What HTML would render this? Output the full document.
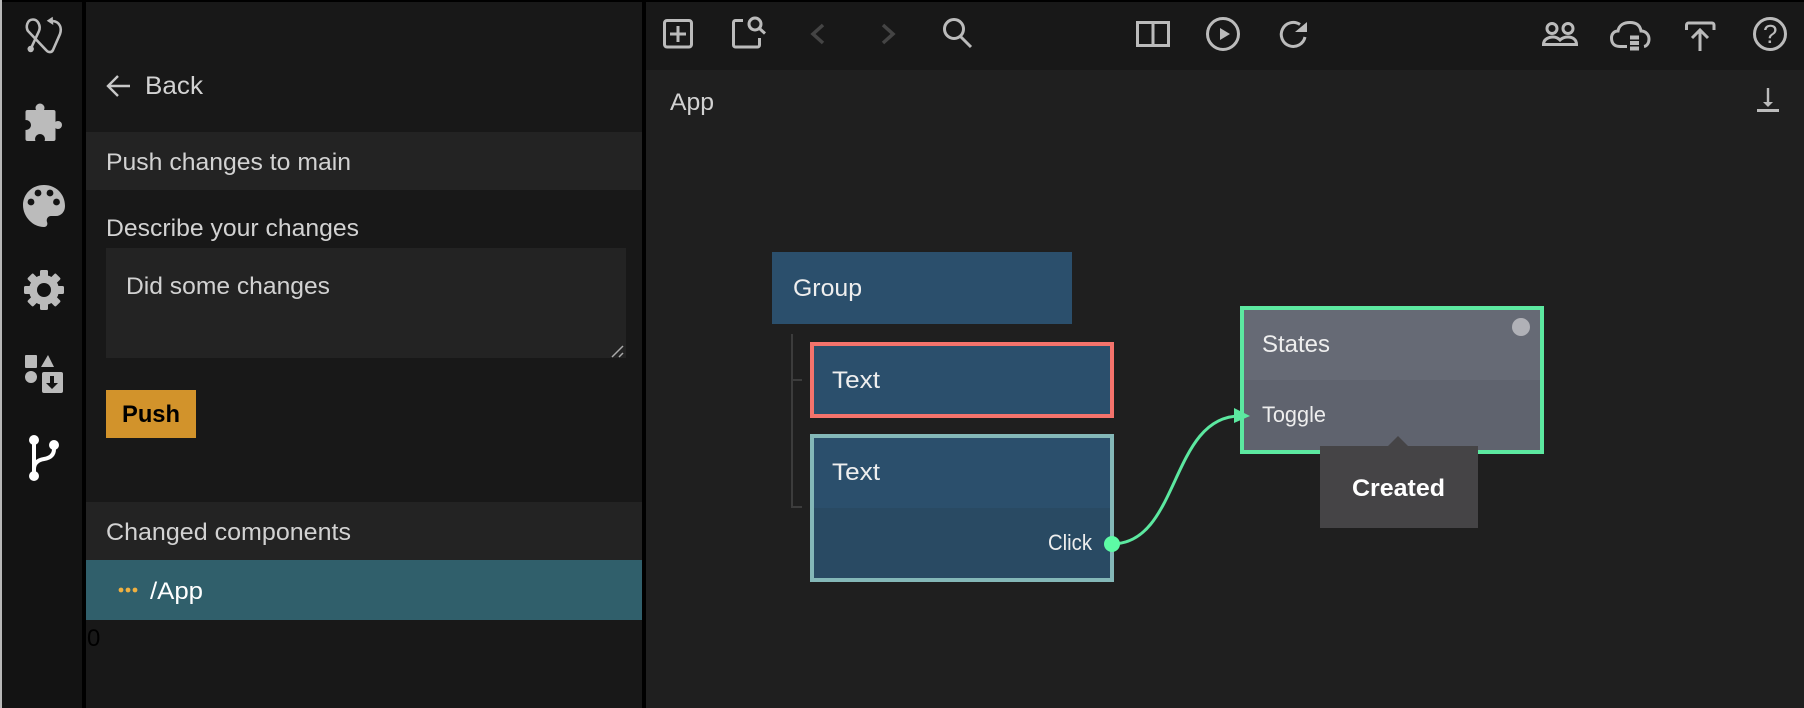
<!DOCTYPE html>
<html><head><meta charset="utf-8"><style>
html,body{margin:0;padding:0;background:#000;width:1804px;height:708px;overflow:hidden}
svg{display:block}
text{font-family:"Liberation Sans",sans-serif;font-size:24px;fill:#d2d2d2}
.i{fill:none;stroke:#bbb;stroke-width:3}
</style></head><body>
<svg width="1804" height="708" viewBox="0 0 1804 708" xmlns="http://www.w3.org/2000/svg">
<rect width="1804" height="708" fill="#000"/>
<rect x="0" y="0" width="2" height="708" fill="#b8b8b8"/>
<rect x="2" y="2" width="80" height="706" fill="#131313"/>
<rect x="86" y="2" width="556" height="706" fill="#181818"/>
<rect x="646" y="2" width="1158" height="68" fill="#181818"/>
<rect x="646" y="70" width="1158" height="638" fill="#1f1f1f"/>

<!-- sidebar icons -->
<path d="M30.7,49 L39,31 C41,26 38,19.5 33,19.5 C27,19.5 25.5,27 28,31 L46,50 C48,52.5 51.5,53 53,50 L60,34 C62,28 60,22 53,21" fill="none" stroke="#bbb" stroke-width="2.6"/>
<circle cx="30.7" cy="49" r="3.2" fill="#bbb"/><path d="M46.7,20.7 L52.7,16.7 L53.3,25Z" fill="#bbb"/>
<rect x="25.5" y="110" width="30" height="31" rx="2" fill="#bbb"/><circle cx="40" cy="108" r="4.5" fill="#bbb"/><circle cx="58" cy="125" r="4" fill="#bbb"/><circle cx="26" cy="125" r="5" fill="#131313"/><circle cx="40" cy="139" r="5" fill="#131313"/>
<path d="M44,185 C32,185 23,194 23,205 C23,217 33,227 44,227 C47,227 48,224 47,222 C46,219 48,216 51,216 H56 C61,216 65,212 65,206 C65,194 56,185 44,185Z" fill="#bbb"/>
<g fill="#131313"><circle cx="31" cy="202" r="3.4"/><circle cx="38" cy="193" r="3.4"/><circle cx="50" cy="193" r="3.4"/><circle cx="56.5" cy="202" r="3.4"/></g>
<g fill="#bbb"><circle cx="44" cy="290" r="15"/>
<rect x="40" y="270" width="8" height="40" rx="1.5"/><rect x="40" y="270" width="8" height="40" rx="1.5" transform="rotate(45 44 290)"/><rect x="40" y="270" width="8" height="40" rx="1.5" transform="rotate(90 44 290)"/><rect x="40" y="270" width="8" height="40" rx="1.5" transform="rotate(135 44 290)"/></g>
<circle cx="44" cy="290" r="7" fill="#131313"/>
<rect x="25" y="355" width="12" height="13" rx="1" fill="#bbb"/><path d="M48,355 L41,367 H54Z" fill="#bbb"/><circle cx="31" cy="377" r="6" fill="#bbb"/>
<rect x="42" y="372" width="21" height="21" rx="2" fill="#bbb"/><path d="M50,376 H54 V383 H58 L52,389 L46,383 H50Z" fill="#131313"/>
<path d="M34,440 V476 M54,445 V449 C54,455 50,458 44,459 C38,460 34,463 34,469" fill="none" stroke="#fff" stroke-width="4"/>
<circle cx="34" cy="440" r="5" fill="#fff"/><circle cx="34" cy="476" r="5" fill="#fff"/><circle cx="54" cy="445" r="5" fill="#fff"/>

<!-- panel -->
<path d="M130,86 H109 M118,76 L108,86 L118,96" fill="none" stroke="#c8c8c8" stroke-width="2.4"/>
<text x="145" y="94" textLength="58" lengthAdjust="spacingAndGlyphs" style="font-size:25px">Back</text>
<rect x="86" y="132" width="556" height="58" fill="#232323"/>
<text x="106" y="170" textLength="245" lengthAdjust="spacingAndGlyphs">Push changes to main</text>
<text x="106" y="236" textLength="253" lengthAdjust="spacingAndGlyphs">Describe your changes</text>
<rect x="106" y="248" width="520" height="110" fill="#232323"/>
<text x="126" y="294" textLength="204" lengthAdjust="spacingAndGlyphs">Did some changes</text>
<path d="M612,357 L623,346 M619,357 L623,353" stroke="#aaa" stroke-width="1.5" fill="none"/>
<rect x="106" y="390" width="90" height="48" fill="#d2932b"/>
<text x="122" y="422" textLength="58" lengthAdjust="spacingAndGlyphs" style="font-weight:bold;fill:#000">Push</text>
<rect x="86" y="502" width="556" height="58" fill="#232323"/>
<text x="106" y="540" textLength="245" lengthAdjust="spacingAndGlyphs">Changed components</text>
<rect x="86" y="560" width="556" height="60" fill="#305f6b"/>
<g fill="#f0b040"><circle cx="121" cy="590" r="2.4"/><circle cx="128" cy="590" r="2.4"/><circle cx="135" cy="590" r="2.4"/></g>
<text x="150" y="599" textLength="53" lengthAdjust="spacingAndGlyphs" style="fill:#fff">/App</text>
<text x="87" y="646" style="fill:#000">0</text>

<!-- toolbar -->
<rect class="i" x="664.5" y="20.5" width="27" height="26.5" rx="2.5"/><path class="i" d="M678,26 V42 M670,34 H686"/>
<path class="i" d="M743,20.5 H735.5 a2,2 0 0 0 -2,2 V45 a2,2 0 0 0 2,2 H757.5 a2,2 0 0 0 2,-2 V38"/><circle class="i" cx="755" cy="24" r="6"/><path class="i" d="M759.5,28.5 L765,33.5"/>
<path d="M823,25 L813,34 L823,43" fill="none" stroke="#444" stroke-width="3.5"/>
<path d="M883,25 L893,34 L883,43" fill="none" stroke="#444" stroke-width="3.5"/>
<circle class="i" cx="954" cy="29" r="9.5"/><path class="i" d="M961,37 L971,47"/>
<rect class="i" x="1137.5" y="22.5" width="31" height="23"/><path class="i" d="M1153,22 V46"/>
<circle class="i" cx="1223" cy="34" r="15.5"/><path d="M1220,28 L1230,34 L1220,40Z" fill="#bbb"/>
<path class="i" d="M1300,24.5 A12,12 0 1 0 1305,37"/><path d="M1307,22 V32 H1295Z" fill="#bbb"/>
<circle class="i" cx="1552" cy="28.5" r="5"/><circle class="i" cx="1568" cy="28.5" r="5"/>
<path class="i" d="M1543.5,44.5 C1543.5,39 1549,37 1553,37 C1556,37 1558,38 1560,40 C1562,38 1564,37 1568,37 C1572,37 1576.5,39 1576.5,44.5 Z"/>
<path class="i" d="M1627,46.5 H1620 C1614,46.5 1611.5,43 1611.5,38 C1611.5,34 1614,31 1618,31 C1619,25 1624,22.5 1630,22.5 C1636,22.5 1640,25 1641,31 C1646,31 1649,35 1649,39 C1649,43 1647,46 1644,46.5"/>
<g fill="#bbb"><rect x="1630" y="35.5" width="9" height="4"/><rect x="1630" y="41" width="9" height="4"/><rect x="1630" y="46.5" width="9" height="4"/></g>
<path class="i" d="M1686.5,30 V25 a2,2 0 0 1 2,-2 H1712 a2,2 0 0 1 2,2 V30"/><path class="i" d="M1700,51 V31 M1692,38 L1700,30 L1708,38"/>
<circle class="i" cx="1770" cy="34" r="15.5"/>
<text x="1763" y="43" style="font-size:26px;fill:#bbb">?</text>
<text x="670" y="110" textLength="44" lengthAdjust="spacingAndGlyphs">App</text>
<path d="M1768,88 V104" stroke="#bbb" stroke-width="2.4" fill="none"/><path d="M1763,102 H1773 L1768,107Z" fill="#bbb"/><rect x="1757" y="109" width="22" height="3" fill="#bbb"/>

<!-- tree -->
<path d="M792,334 V507 H802 M792,380 H802" fill="none" stroke="#3c3c3c" stroke-width="2"/>
<!-- Group -->
<rect x="772" y="252" width="300" height="72" fill="#2b4f6c"/>
<text x="793" y="296" textLength="69" lengthAdjust="spacingAndGlyphs" style="fill:#eee">Group</text>
<!-- Text red -->
<rect x="812" y="344" width="300" height="72" fill="#2b4f6c" stroke="#f4736c" stroke-width="4"/>
<text x="832" y="388" textLength="48" lengthAdjust="spacingAndGlyphs" style="fill:#eee">Text</text>
<!-- Text teal -->
<rect x="812" y="436" width="300" height="72" fill="#2b4f6c"/>
<rect x="812" y="508" width="300" height="72" fill="#294a63"/>
<rect x="812" y="436" width="300" height="144" fill="none" stroke="#84b8b8" stroke-width="4"/>
<text x="832" y="480" textLength="48" lengthAdjust="spacingAndGlyphs" style="fill:#eee">Text</text>
<text x="1048" y="550" textLength="44" lengthAdjust="spacingAndGlyphs" style="font-size:22px;fill:#eee">Click</text>
<!-- States -->
<rect x="1242" y="308" width="300" height="72" fill="#666a75"/>
<rect x="1242" y="380" width="300" height="72" fill="#5f636e"/>
<rect x="1242" y="308" width="300" height="144" fill="none" stroke="#5ce8a0" stroke-width="4"/>
<text x="1262" y="352" textLength="68" lengthAdjust="spacingAndGlyphs" style="fill:#eee">States</text>
<text x="1262" y="422" textLength="64" lengthAdjust="spacingAndGlyphs" style="font-size:22px;fill:#eee">Toggle</text>
<circle cx="1521" cy="327" r="9" fill="#b0b1b7"/>
<!-- connection -->
<path d="M1112,544 C1180,544 1170,416 1240,416" fill="none" stroke="#5ce8a0" stroke-width="3"/>
<path d="M1234,408 L1250,416 L1234,423Z" fill="#5ce8a0"/>
<circle cx="1112" cy="544" r="8" fill="#5dfba5"/>
<!-- tooltip -->
<rect x="1320" y="446" width="158" height="82" fill="#454446"/>
<path d="M1388,446 L1398,436 L1408,446Z" fill="#454446"/>
<text x="1352" y="496" textLength="93" lengthAdjust="spacingAndGlyphs" style="font-weight:bold;fill:#fff">Created</text>
</svg>
</body></html>
